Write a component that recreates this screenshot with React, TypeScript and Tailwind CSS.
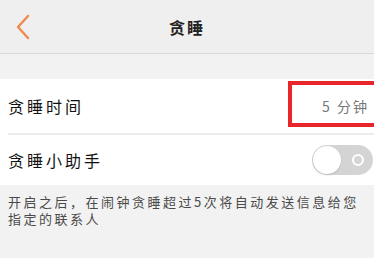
import React from 'react';

const FONT = { fontFamily: '"Noto Sans CJK SC", "Noto Sans", sans-serif' };

function Toggle() {
  return (
    <div className="relative h-[30px] w-[61px] rounded-full bg-[#d4d4d4]">
      <div className="absolute left-[1px] top-[1px] h-[28px] w-[28px] rounded-full bg-white shadow-[0_1px_2px_rgba(0,0,0,0.15)]" />
      <div className="absolute right-[9px] top-[9px] h-[12px] w-[12px] rounded-full border-2 border-white" />
    </div>
  );
}

export default function App() {
  return (
    <div className="w-[374px] h-[276px] overflow-hidden bg-[#f2f2f2]" style={FONT}>
      {/* nav bar */}
      <div className="grid h-[54px] grid-cols-[60px_1fr_60px] items-center border-b border-[#d9d9d9] bg-[#efefef]">
        <div className="flex items-center pl-[15px]">
          <svg width="16" height="26" viewBox="0 0 16 26" fill="none">
            <path d="M13 2 L3 13 L13 24" stroke="#ee8a4c" strokeWidth="2.4" strokeLinecap="round" strokeLinejoin="round" />
          </svg>
        </div>
        <div className="text-center text-[16px] font-bold tracking-[2px] text-[#222]">贪睡</div>
        <div />
      </div>

      <div className="h-[25px]" />

      {/* snooze time */}
      <div className="bg-white">
        <div className="relative flex h-[54px] items-center justify-between pl-2 pr-[5px]">
          <span className="text-[16px] tracking-[3px] text-[#111]">贪睡时间</span>
          <span className="text-[14px] tracking-[2px] text-[#777]">5 分钟</span>
          <div className="absolute left-[288px] top-[2px] h-[46px] w-[100px] border-4 border-[#e8262c]" />
        </div>
        <div className="ml-2 h-[2px] bg-[#ececec]" />
        <div className="flex h-[50px] items-center justify-between pl-2 pr-[1px]">
          <span className="text-[16px] tracking-[3px] text-[#111]">贪睡小助手</span>
          <Toggle />
        </div>
      </div>

      {/* description */}
      <div className="h-[73px] pl-2 pt-[8px] whitespace-nowrap text-[13px] leading-[17px] tracking-[2.5px] text-[#4a4a4a]">
        开启之后，在闹钟贪睡超过5次将自动发送信息给您
        <br />
        指定的联系人
      </div>

      <div className="h-[40px] bg-white pl-2 pt-[14px] text-[16px] tracking-[3px] text-[#111]">联系人</div>
    </div>
  );
}
